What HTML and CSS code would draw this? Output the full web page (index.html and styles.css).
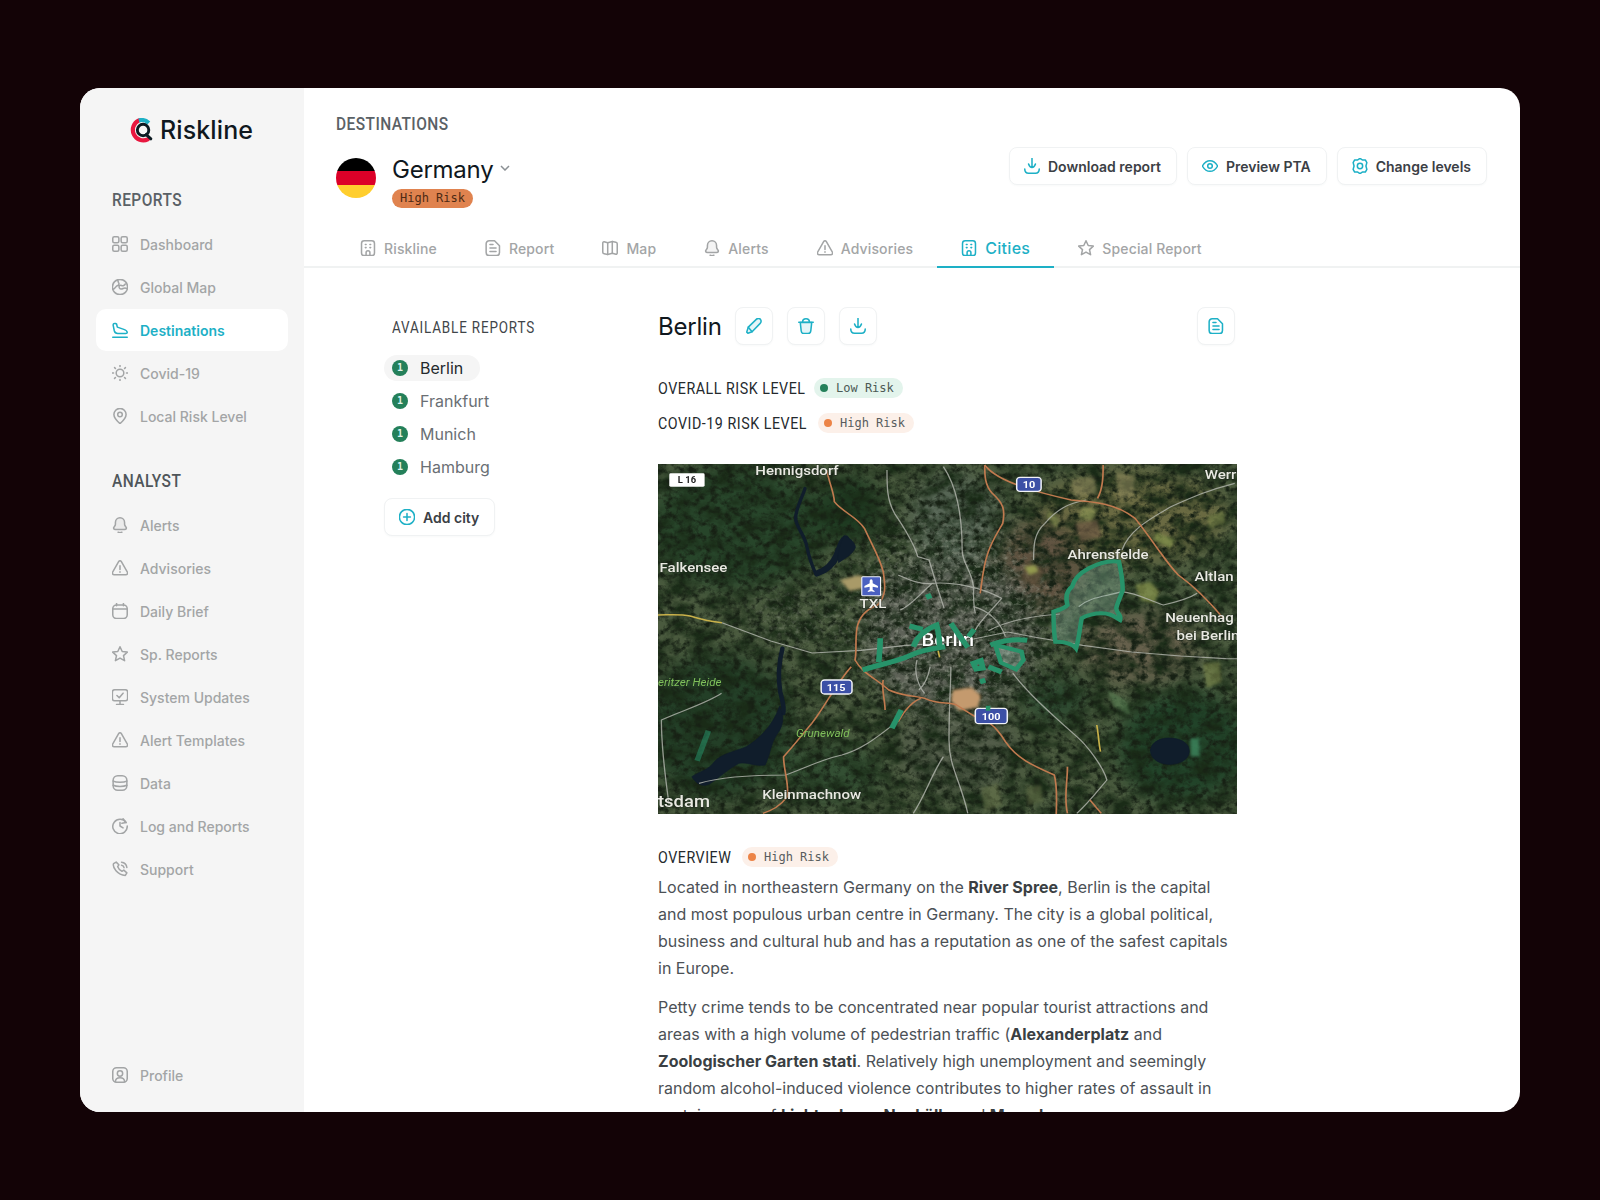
FILE: index.html
```html
<!DOCTYPE html>
<html lang="en">
<head>
<meta charset="utf-8">
<title>Riskline – Destinations</title>
<link rel="stylesheet" href="styles.css">
</head>
<body>
<svg class="defs" width="0" height="0" aria-hidden="true">
  <symbol id="i-grid" viewBox="1.500 1.500 21 21"><rect x="2.500" y="2.500" width="8" height="8" rx="2"/><rect x="13.500" y="2.500" width="8" height="8" rx="2"/><rect x="2.500" y="13.500" width="8" height="8" rx="2"/><rect x="13.500" y="13.500" width="8" height="8" rx="2"/></symbol>
  <symbol id="i-globe" viewBox="1.500 1.500 21 21"><circle cx="12" cy="12" r="10"/><path d="M3 15c3-1 3-4 6-5 2-.6 2-3 1-4l-1-3M21 14c-2-1-3-1-5 0-2 1-4 1-5-1-1-2 1-4 3-3 2 1 4 0 5-2"/></symbol>
  <symbol id="i-plane" viewBox="1.500 1.500 21 21"><path d="M2.500 21.500h19"/><path d="M3 5.500c0-1.500 1.500-2.500 3-2l1.500.7 1 4 8.500 3c2.500.9 4.500 2.300 4.500 4 0 .8-.8 1.300-2 1.300H9c-2.500 0-4-1.500-4.500-3.500z"/></symbol>
  <symbol id="i-sun" viewBox="1.500 1.500 21 21"><circle cx="12" cy="12" r="5"/><path d="M12 2v1.500M12 20.500V22M2 12h1.500M20.500 12H22M4.900 4.900 6 6M18 18l1.100 1.100M4.900 19.100 6 18M18 6l1.100-1.100"/></symbol>
  <symbol id="i-pin" viewBox="1.500 1.500 21 21"><path d="M12 22c-4-3.500-8-7.500-8-12a8 8 0 0 1 16 0c0 4.500-4 8.500-8 12z"/><circle cx="12" cy="10" r="3"/></symbol>
  <symbol id="i-bell" viewBox="1.500 1.500 21 21"><path class="tint" d="M12 2.500c-3.700 0-6 2.800-6 6.300v2.200c0 1.500-.8 2.300-1.800 3.500-1.300 1.600-.5 3.500 1.800 3.500h12c2.300 0 3.100-1.900 1.800-3.500-1-1.200-1.800-2-1.800-3.500V8.800c0-3.500-2.300-6.300-6-6.300z"/><path d="M9.500 21.500c1.500 1 3.500 1 5 0"/></symbol>
  <symbol id="i-warn" viewBox="1.500 1.500 21 21"><path d="M10.200 3.600 2.300 17.500c-.9 1.600.2 3.500 2 3.500h15.400c1.800 0 2.900-1.900 2-3.500L13.800 3.600c-.8-1.400-2.800-1.400-3.600 0z"/><path d="M12 9v5M12 17v.5"/></symbol>
  <symbol id="i-cal" viewBox="1.500 1.500 21 21"><rect x="2.500" y="4" width="19" height="18" rx="5"/><path d="M7.500 2V5M16.500 2V5M3 9.500h18"/></symbol>
  <symbol id="i-star" viewBox="1.500 1.500 21 21"><path d="m12 2.500 2.900 6.200 6.700.8-5 4.600 1.400 6.700L12 17.400l-6 3.400 1.400-6.700-5-4.600 6.700-.8z"/></symbol>
  <symbol id="i-screen" viewBox="1.500 1.500 21 21"><rect x="2" y="2.500" width="20" height="14.500" rx="3"/><path d="M12 17v5M7.500 22h9M8 10l3 3 5-6"/></symbol>
  <symbol id="i-data" viewBox="1.500 1.500 21 21"><rect x="3" y="2.500" width="18" height="19" rx="6"/><path d="M3 9.500c4 2 14 2 18 0M3 15c4 2 14 2 18 0"/></symbol>
  <symbol id="i-log" viewBox="1.500 1.500 21 21"><path d="M20 7.500A9.500 9.500 0 1 0 21.500 12"/><path d="M16 2.500 20 7.500 14.500 8.500M12 7.500V12l4 2.500"/></symbol>
  <symbol id="i-phone" viewBox="1.500 1.500 21 21"><path d="M7 3 3.500 5c-1.500 5 5 15 15.500 15.500L21 17l-4-3.500-2.500 1.500c-2.500-1-4.500-3.500-5.500-6l1.500-2.500z"/><path d="M14 3c4 .5 6.500 3 7 7M14 7c2 .3 3 1.300 3.300 3.200"/></symbol>
  <symbol id="i-user" viewBox="1.500 1.500 21 21"><rect x="2.500" y="2.500" width="19" height="19" rx="5"/><circle cx="12" cy="10" r="3.500"/><path d="M6 21c0-7 12-7 12 0"/></symbol>
  <symbol id="i-build" viewBox="1.500 1.500 21 21"><rect x="3.500" y="2.500" width="17" height="19.500" rx="3.500"/><path d="M8.500 7.500h1M14.500 7.500h1M8.500 11.500h1M14.500 11.500h1M9.500 22v-4a2.500 2.500 0 0 1 5 0v4"/></symbol>
  <symbol id="i-doc" viewBox="1.500 1.500 21 21"><path d="M7 2.500h7l6.500 6.500v9a4 4 0 0 1-4 4H7a4 4 0 0 1-4-4V6.500a4 4 0 0 1 4-4z"/><path d="M8 12h8M8 16.500h8M8 7.500h4"/></symbol>
  <symbol id="i-map" viewBox="1.500 1.500 21 21"><path d="M2.500 5.500c0-1 .8-1.800 1.800-1.600L9 5l6-1.500 4.700 1c1 .2 1.800 1 1.800 2v12c0 1-.8 1.800-1.800 1.600L15 19l-6 1.500-4.700-1c-1-.2-1.800-1-1.800-2z"/><path d="M9 5v15.500M15 3.500V19"/></symbol>
  <symbol id="i-down" viewBox="1.500 1.500 21 21"><path d="M12 2v11M7.500 9.500c1 3 3 4.500 4.500 4.500s3.500-1.500 4.500-4.500"/><path d="M2.500 16c0 3.500 2 5.500 5 5.500h9c3 0 5-2 5-5.500"/></symbol>
  <symbol id="i-eye" viewBox="1.500 1.500 21 21"><path d="M2 12c2.500-4.500 6-7 10-7s7.500 2.500 10 7c-2.500 4.500-6 7-10 7s-7.500-2.500-10-7z"/><circle cx="12" cy="12" r="3"/></symbol>
  <symbol id="i-gear" viewBox="1.500 1.500 21 21"><path d="M12 2 15 4h4l2 3.500-1.200 4.500 1.200 4.500L19 20h-4l-3 2-3-2H5l-2-3.500L4.200 12 3 7.500 5 4h4z"/><circle cx="12" cy="12" r="3.500"/></symbol>
  <symbol id="i-edit" viewBox="1.500 1.500 21 21"><path class="tint" d="M4 21.500 2.500 20l2-6.500L15 3.300c2-2 4.700-1.500 5.700.4 1 1.700.6 3.700-.9 5.200L9.500 19.500z"/><path d="M4.500 13.500l5 6"/></symbol>
  <symbol id="i-trash" viewBox="1.500 1.500 21 21"><path class="tint" d="M4.500 7.500h15l-1.200 11c-.2 2-1.600 3.500-3.600 3.500H9.300c-2 0-3.400-1.500-3.600-3.500z"/><path d="M2.500 7h19M7.500 7c0-3 2-4.500 4.500-4.500s4.500 1.500 4.500 4.500"/></symbol>
  <symbol id="i-plus" viewBox="1.500 1.500 21 21"><circle cx="12" cy="12" r="10"/><path d="M12 7.500v9M7.500 12h9"/></symbol>
</svg>

<div class="window">
  <aside class="sidebar">
    <div class="logo">
      <svg class="logo-mark" viewBox="0 0 24 24" aria-hidden="true">
        <path class="logo-red" d="M9.500 2.300A10 10 0 0 0 18 20.500"/>
        <path class="logo-cyan" d="M9.500 2.300a10 10 0 0 1 9.500 2.500"/>
        <circle class="logo-dark" cx="13.500" cy="11.500" r="5.500"/>
        <path class="logo-dark" d="m16.500 16 4.500 4"/>
      </svg>
      <span class="logo-text">Riskline</span>
    </div>

    <h2 class="nav-title"><span class="narrow">REPORTS</span></h2>
    <nav class="nav">
      <a class="nav-item"><svg class="ico"><use href="#i-grid"/></svg>Dashboard</a>
      <a class="nav-item"><svg class="ico"><use href="#i-globe"/></svg>Global Map</a>
      <a class="nav-item is-active"><svg class="ico"><use href="#i-plane"/></svg>Destinations</a>
      <a class="nav-item"><svg class="ico"><use href="#i-sun"/></svg>Covid-19</a>
      <a class="nav-item"><svg class="ico"><use href="#i-pin"/></svg>Local Risk Level</a>
    </nav>

    <h2 class="nav-title nav-title-second"><span class="narrow">ANALYST</span></h2>
    <nav class="nav">
      <a class="nav-item"><svg class="ico"><use href="#i-bell"/></svg>Alerts</a>
      <a class="nav-item"><svg class="ico"><use href="#i-warn"/></svg>Advisories</a>
      <a class="nav-item"><svg class="ico"><use href="#i-cal"/></svg>Daily Brief</a>
      <a class="nav-item"><svg class="ico"><use href="#i-star"/></svg>Sp. Reports</a>
      <a class="nav-item"><svg class="ico"><use href="#i-screen"/></svg>System Updates</a>
      <a class="nav-item"><svg class="ico"><use href="#i-warn"/></svg>Alert Templates</a>
      <a class="nav-item"><svg class="ico"><use href="#i-data"/></svg>Data</a>
      <a class="nav-item"><svg class="ico"><use href="#i-log"/></svg>Log and Reports</a>
      <a class="nav-item"><svg class="ico"><use href="#i-phone"/></svg>Support</a>
    </nav>

    <a class="nav-item nav-bottom"><svg class="ico"><use href="#i-user"/></svg>Profile</a>
  </aside>

  <main class="main">
    <header class="head">
      <div class="head-left">
        <div class="crumb"><span class="narrow">DESTINATIONS</span></div>
        <div class="identity">
          <div class="flag"><span class="flag-b"></span><span class="flag-r"></span><span class="flag-y"></span></div>
          <div class="identity-text">
            <div class="country">Germany
              <svg class="chev" viewBox="0 0 10 6"><path d="m1 1 4 4 4-4"/></svg>
            </div>
            <span class="risk-solid">High Risk</span>
          </div>
        </div>
      </div>
      <div class="actions">
        <button class="btn"><svg class="ico ico-accent"><use href="#i-down"/></svg>Download report</button>
        <button class="btn"><svg class="ico ico-accent"><use href="#i-eye"/></svg>Preview PTA</button>
        <button class="btn"><svg class="ico ico-accent"><use href="#i-gear"/></svg>Change levels</button>
      </div>
    </header>

    <div class="tabs">
      <a class="tab"><svg class="ico"><use href="#i-build"/></svg>Riskline</a>
      <a class="tab"><svg class="ico"><use href="#i-doc"/></svg>Report</a>
      <a class="tab"><svg class="ico"><use href="#i-map"/></svg>Map</a>
      <a class="tab"><svg class="ico"><use href="#i-bell"/></svg>Alerts</a>
      <a class="tab"><svg class="ico"><use href="#i-warn"/></svg>Advisories</a>
      <a class="tab is-active"><svg class="ico"><use href="#i-build"/></svg>Cities</a>
      <a class="tab"><svg class="ico"><use href="#i-star"/></svg>Special Report</a>
    </div>

    <div class="content">
      <section class="cities">
        <h3 class="cities-title"><span class="narrow narrow-title">AVAILABLE REPORTS</span></h3>
        <ul class="city-list">
          <li class="city is-active"><span class="city-dot">1</span>Berlin</li>
          <li class="city"><span class="city-dot">1</span>Frankfurt</li>
          <li class="city"><span class="city-dot">1</span>Munich</li>
          <li class="city"><span class="city-dot">1</span>Hamburg</li>
        </ul>
        <button class="btn btn-add"><svg class="ico ico-accent"><use href="#i-plus"/></svg>Add city</button>
      </section>

      <section class="detail">
        <div class="detail-head">
          <h1 class="detail-title">Berlin</h1>
          <button class="icon-btn"><svg class="ico ico-accent"><use href="#i-edit"/></svg></button>
          <button class="icon-btn"><svg class="ico ico-accent"><use href="#i-trash"/></svg></button>
          <button class="icon-btn"><svg class="ico ico-accent"><use href="#i-down"/></svg></button>
          <button class="icon-btn icon-btn-end"><svg class="ico ico-accent"><use href="#i-doc"/></svg></button>
        </div>

        <div class="risk-row risk-row-first"><span class="label label-overall"><span class="narrow">OVERALL RISK LEVEL</span></span><span class="pill pill-low"><i class="pill-dot"></i>Low Risk</span></div>
        <div class="risk-row risk-row-second"><span class="label label-covid"><span class="narrow">COVID-19 RISK LEVEL</span></span><span class="pill pill-high"><i class="pill-dot"></i>High Risk</span></div>

        <svg class="map" viewBox="21 12 1540 1050" preserveAspectRatio="none" role="img" aria-label="Satellite map of Berlin">
          <defs>
            <filter id="mottle" x="0" y="0" width="100%" height="100%" color-interpolation-filters="sRGB">
              <feTurbulence type="fractalNoise" baseFrequency="0.018 0.022" numOctaves="5" seed="11"/>
              <feColorMatrix values="0 0 0 0 .10  0 0 0 0 .17  0 0 0 0 .09  2.400 0 0 0 -.85"/>
            </filter>
            <filter id="fine" x="0" y="0" width="100%" height="100%" color-interpolation-filters="sRGB">
              <feTurbulence type="fractalNoise" baseFrequency="0.05" numOctaves="4" seed="23"/>
              <feColorMatrix values="0 0 0 0 .09  0 0 0 0 .13  0 0 0 0 .08  0 3 0 0 -1.300"/>
            </filter>
            <filter id="speck" x="0" y="0" width="100%" height="100%" color-interpolation-filters="sRGB">
              <feTurbulence type="fractalNoise" baseFrequency="0.08" numOctaves="3" seed="4"/>
              <feColorMatrix values="0 0 0 0 .66  0 0 0 0 .68  0 0 0 0 .62  0 3 0 0 -1.450"/>
            </filter>
            <filter id="soft" color-interpolation-filters="sRGB"><feGaussianBlur stdDeviation="30"/></filter>
            <filter id="soft3" color-interpolation-filters="sRGB"><feGaussianBlur stdDeviation="60"/></filter>
            <filter id="soft1" color-interpolation-filters="sRGB"><feGaussianBlur stdDeviation="4"/></filter>
            <mask id="urban">
              <g filter="url(#soft3)" fill="#fff">
                <ellipse cx="800" cy="480" rx="280" ry="290"/>
                <ellipse cx="380" cy="480" rx="120" ry="60"/>
              </g>
            </mask>
          </defs>
          <rect x="21" y="12" width="1540" height="1050" fill="#4a5a3e"/>
          <g filter="url(#soft)">
            <ellipse cx="1280" cy="170" rx="260" ry="140" fill="#6a6a42"/>
            <ellipse cx="1040" cy="320" rx="120" ry="140" fill="#5f5240"/>
            <ellipse cx="1300" cy="560" rx="160" ry="110" fill="#66604c"/>
            <ellipse cx="800" cy="520" rx="230" ry="240" fill="#5e6258"/>
            <ellipse cx="810" cy="180" rx="120" ry="140" fill="#576656"/>
            <ellipse cx="820" cy="860" rx="160" ry="140" fill="#525c49"/>
            <ellipse cx="230" cy="200" rx="240" ry="190" fill="#27452a"/>
            <ellipse cx="530" cy="150" rx="90" ry="110" fill="#1e3a21"/>
            <ellipse cx="180" cy="800" rx="200" ry="220" fill="#233f27"/>
            <ellipse cx="1420" cy="860" rx="180" ry="170" fill="#214329"/>
            <ellipse cx="1080" cy="720" rx="90" ry="70" fill="#2b482f"/>
            <ellipse cx="480" cy="940" rx="140" ry="90" fill="#334f33"/>
          </g>
          <rect x="21" y="12" width="1540" height="1050" filter="url(#mottle)"/>
          <rect x="21" y="12" width="1540" height="1050" filter="url(#fine)"/>
          <rect x="21" y="12" width="1540" height="1050" filter="url(#speck)" mask="url(#urban)" opacity=".5"/>
          <g filter="url(#soft1)" class="fields">
            <path fill="#c49a6e" d="M805 690l50-8 25 25-8 35-50 10-22-30z"/>
            <path fill="#a99a68" d="M505 360l50-15 20 10-5 30-40 8z"/>
            <path fill="#8d9a50" opacity=".7" d="M1290 375l40-10 25 30-15 35-35-10z"/>
            <path fill="#8f9c52" opacity=".7" d="M1345 215l50 25-10 25-45-25z"/>
            <path fill="#9aa25c" opacity=".6" d="M1060 150l30 30-10 25-25-35zM1150 140l45 5-25 40-30-15z"/>
            <path fill="#7e8a4c" opacity=".6" d="M1480 170l45-20 5 40-40 15zM1470 610l45-5 5 60-40 20z"/>
            <path fill="#6f5a45" opacity=".7" d="M1000 300l50 30-25 50-40-25zM1130 190l60-10 10 50-55 15z"/>
            <path fill="#8f8a5e" opacity=".6" d="M1120 60l60-10 10 50-60 10zM1240 40l50 10-5 60-40 5z"/>
            <path fill="#a3ae55" opacity=".8" d="M995 320l30-5 8 20-25 10z"/>
            <path fill="#3f8a60" opacity=".8" d="M1437 835h24v55h-24z"/>
            <path fill="#6e7a4e" opacity=".5" d="M880 985l45-15 10 65-45 20zM1000 980l40-5 5 50-40 10z"/>
            <path fill="#5e8a5a" opacity=".5" d="M1215 690l50 30 15 50-45-30z"/>
          </g>
          <g class="water">
            <path d="M412 85c-8 30-25 60-25 90 0 25 25 50 30 85 5 30 15 60 25 85"/>
            <path class="water-wide" d="M445 340c25-10 40-25 50-50 10-25 15-50 25-55"/>
            <path class="water-thin" d="M352 565c-10 45-12 90-6 130 5 25 12 45 8 65"/>
            <path class="water-lake" d="M344 740c15 30 10 60-8 85-15 25-15 55-30 90-30 5-45-10-70-5-25 15-50 40-75 60-20 15-40 0-50-20 20-15 45-20 60-45 20-25 55-30 85-45 30-20 70-60 88-120z"/>
            <path class="water-lake" d="M1331 870c2-25 30-40 60-35 28 3 45 20 43 42-3 25-30 38-58 36-25-2-47-20-45-43z"/>
            <path class="water-lake" d="M516 228c15 5 30 20 30 35-8 20-25 30-45 45-5-25 5-60 15-80z"/>
          </g>
          <g class="road-gray">
            <path d="M191 488l130 55 110 36 130-8 120-15 140-10 130-30 70 15 130 25 130 20 130 12 120 8 150 1"/>
            <path d="M630 30c0 50 0 90 20 130 30 50 55 100 62 130l30 10 20 75 20 70"/>
            <path d="M780 20c30 50 50 130 50 250 0 40 25 60 30 110 0 30 0 60 5 80"/>
            <path d="M750 370c50-5 130 10 185 45-30 40-60 70-70 95"/>
            <path d="M660 345c30 15 60 30 90 25-30 30-60 70-85 80M860 440c35 10 70 40 85 90"/>
            <path d="M1090 462c-70 5-140 20-190 50M1140 440c30-30 70-30 115-45 40 5 70 25 110 40 40-10 70-20 90-35"/>
            <path d="M1020 300c0-40 0-80 30-110 30-40 60-60 110-70M1255 270c20-60 70-90 130-130 60-30 100-50 170-70"/>
            <path d="M800 620c0 50-5 110-5 220 0 80 30 120 50 220M710 600c-10 40 5 80 20 100M745 620c-5 30-15 55-30 70"/>
            <path d="M965 640c40 60 100 120 170 190 30 30 70 90 80 130-30 40-50 70-80 100"/>
            <path d="M640 800c-40 35-80 70-130 85-60 15-110 45-150 60-80 0-170 5-230 25"/>
            <path d="M190 700c-40 30-100 50-160 80 0 80 10 170 20 250M780 890c-30 50-50 120-80 170"/>
          </g>
          <g class="road-orange">
            <path d="M470 30c5 35 20 70 20 95 20 30 60 45 80 80 20 50 40 85 50 130 5 40 10 70-15 100-35 15-50 40-55 70-5 40 0 70-5 95 20 40 55 55 90 90 40 20 60 15 95 25 40 20 60 10 85 20 30 20 50 40 80 50 20 10 40 40 50 60 30 50 70 70 130 100 10 40 5 90 5 135"/>
            <path d="M535 620c-40 50-70 120-105 170-30 40-50 70-75 100 0 40 15 80 10 120-20 30-40 40-65 50"/>
            <path d="M890 15c0 30 0 60 20 85 30 30 35 50 28 90-15 30-30 55-40 90-12 40-15 80-20 120"/>
            <path d="M890 15c20 30 60 50 100 65 50 20 90 30 130 40 60 5 120 10 170 55 50 70 80 130 115 170 50 40 90 90 120 130"/>
            <path d="M1205 15c0 30 0 70-15 100M620 660c-5 30 5 60 5 90M720 715c-25 10-45 40-60 70M1110 920c0 50-10 90 0 140M1170 1020l30 40"/>
          </g>
          <g class="road-yellow">
            <path d="M21 465c30 0 60-3 85 3 30 10 55 17 85 20M1188 795c5 30 5 55 10 80M766 572l4 20"/>
          </g>
          <g class="shield">
            <rect x="975" y="52" width="65" height="42" rx="9"/><text class="shield-text" x="1008" y="83">10</text>
            <rect x="455" y="660" width="82" height="42" rx="9"/><text class="shield-text" x="495" y="693">115</text>
            <rect x="865" y="745" width="85" height="46" rx="9"/><text class="shield-text" x="907" y="779">100</text>
          </g>
          <rect class="air" x="563" y="350" width="50" height="57" rx="3"/>
          <path class="air-plane" d="M588 358c3 0 4 3 4 7v5l14 8v5l-14-3v9l5 4v3l-9-2-9 2v-3l5-4v-9l-14 3v-5l14-8v-5c0-4 1-7 4-7z"/>
          <rect class="l16" x="51" y="40" width="94" height="40" rx="4"/>
          <text class="l16-text" x="98" y="70">L 16</text>
          <g class="labels">
            <text x="280" y="46">Hennigsdorf</text>
            <text x="1475" y="57">Werr</text>
            <text x="25" y="337">Falkensee</text>
            <text x="1110" y="298">Ahrensfelde</text>
            <text x="1448" y="363">Altlan</text>
            <text x="1370" y="485">Neuenhag</text>
            <text x="1400" y="540">bei Berlin</text>
            <text x="557" y="445">TXL</text>
            <text x="298" y="1016">Kleinmachnow</text>
            <text class="label-lg" x="21" y="1042">tsdam</text>
            <text class="label-city" x="722" y="558">Berlin</text>
          </g>
          <g class="labels-green">
            <text x="21" y="678">eritzer Heide</text>
            <text x="388" y="832">Grunewald</text>
          </g>
          <g class="zone">
            <path class="zone-fill" d="M1122 380c5-20 20-40 45-55 25-15 50-25 80-20 5 25 10 50 10 85-5 20-15 40-17 55 0 15 15 20 10 35-15-10-25-20-50-20-15 0-40 5-52 15-5 25-5 50-15 90-10-15-35-20-55-20-5-30-5-60-5-90 15-5 30-10 37-20-5-20-5-40 12-55z"/>
            <path d="M565 630c40-15 90-25 130-45 25-15 60-20 90-25M612 535c0 25-2 50-4 72M690 498l35 10M700 560c10-30 30-50 62-65 5 20 8 45 8 72M800 490c15 25 30 50 45 72M862 508l-15 22M738 402l6 14M905 555c30-12 60-20 98-14"/>
            <path class="zone-fill-b" d="M918 555l70 20 5 25-20 28-40-20z"/>
            <path d="M860 610l20-8 5 22-18 3zM900 620l35 16M882 656l5 14M893 745h12M668 750l-25 55"/>
            <path class="zone-dim" d="M155 812l-30 90"/>
          </g>
        </svg>

        <div class="risk-row overview-row"><span class="label label-overview"><span class="narrow">OVERVIEW</span></span><span class="pill pill-high"><i class="pill-dot"></i>High Risk</span></div>
        <p class="para">Located in northeastern Germany on the <b>River Spree</b>, Berlin is the capital and most populous urban centre in Germany. The city is a global political, business and cultural hub and has a reputation as one of the safest capitals in Europe.</p>
        <p class="para">Petty crime tends to be concentrated near popular tourist attractions and areas with a high volume of pedestrian traffic (<b>Alexanderplatz</b> and <b>Zoologischer Garten stati</b>. Relatively high unemployment and seemingly random alcohol-induced violence contributes to higher rates of assault in certain areas of <b>Lichtenberg, Neukölln</b> and <b>Marzahn</b>.</p>
      </section>
    </div>
  </main>
</div>
</body>
</html>
```

FILE: styles.css
```css
* { box-sizing: border-box; }
html, body { height: 100%; }
body {
  margin: 0;
  padding: 88px 80px;
  background: #130306;
  font-family: "Inter", "Liberation Sans", sans-serif;
  overflow: hidden;
}
.defs { position: absolute; }
a { display: block; }
button { font-family: inherit; }

.narrow {
  display: inline-block;
  font-family: "Roboto", "Liberation Sans", sans-serif;
  white-space: nowrap;
  transform: scaleX(.86);
  transform-origin: left center;
}
.narrow-title { transform: scaleX(.84); }
.label .narrow { transform: scaleX(.89); }

.window {
  display: flex;
  width: 1440px;
  height: 1024px;
  border-radius: 20px;
  overflow: hidden;
  background: #fff;
}

/* Sidebar */
.sidebar {
  display: flex;
  flex-direction: column;
  flex: 0 0 224px;
  padding: 30px 16px 0;
  background: #f5f5f5;
}
.logo { display: flex; align-items: center; gap: 6px; height: 24px; margin-left: 33px; }
.logo-mark { width: 25px; height: 25px; fill: none; stroke-width: 4; stroke-linecap: round; }
.logo-red { stroke: #e8173f; }
.logo-cyan { stroke: #1fb1c6; stroke-linecap: butt; }
.logo-dark { stroke: #0c1a22; stroke-width: 2.800; }
.logo-text { font-size: 25px; font-weight: 500; color: #10181e; letter-spacing: .1px; }

.nav-title {
  margin: 47px 0 12px;
  padding-left: 16px;
  height: 22px;
  font-size: 18px;
  font-weight: 500;
  line-height: 22px;
  letter-spacing: .5px;
  color: #5a6166;
}
.nav-title-second { margin-top: 33px; color: #4f565a; }
.nav { display: flex; flex-direction: column; gap: 1px; }
.nav-item {
  display: flex;
  align-items: center;
  gap: 12px;
  height: 42px;
  padding-left: 16px;
  border-radius: 10px;
  font-size: 14px;
  font-weight: 500;
  color: #a3a5a6;
}
.nav-item.is-active { background: #fff; color: #1db0c6; font-weight: 600; }
.nav-bottom { margin-top: auto; margin-bottom: 16px; }

.ico {
  flex: none;
  width: 16px;
  height: 16px;
  fill: none;
  stroke: currentColor;
  stroke-width: 2;
  stroke-linecap: round;
  stroke-linejoin: round;
}
.ico-accent { color: #1db0c6; }
.tint { fill: currentColor; fill-opacity: .12; }

/* Main */
.main { flex: 1; min-width: 0; }
.head { display: flex; justify-content: space-between; align-items: flex-start; padding: 25px 33px 0 32px; }
.crumb { font-size: 18px; font-weight: 500; line-height: 22px; letter-spacing: .5px; color: #5a6166; }
.identity { display: flex; gap: 16px; margin-top: 23px; }
.flag { display: flex; flex-direction: column; width: 40px; height: 40px; border-radius: 50%; overflow: hidden; }
.flag span { flex: 1; }
.flag-b { background: #000; }
.flag-r { background: #dc0028; }
.flag-y { background: #ffce2e; }
.identity-text { display: flex; flex-direction: column; align-items: flex-start; }
.country { display: flex; align-items: center; gap: 7px; height: 24px; font-size: 24px; color: #10181e; line-height: 24px; letter-spacing: -.25px; }
.chev { width: 10px; height: 6px; margin-top: -4px; fill: none; stroke: #8b9094; stroke-width: 1.500; }
.risk-solid {
  margin-top: 7px;
  padding: 0 8px;
  height: 19px;
  border-radius: 10px;
  background: #e0834f;
  color: #4d2a14;
  font: 400 12px/19px "DejaVu Sans Mono", "Liberation Mono", monospace;
}
.actions { display: flex; gap: 10px; margin-top: 34px; }
.btn {
  display: flex;
  align-items: center;
  gap: 8px;
  height: 38px;
  padding: 0 15px 0 14px;
  border: 1px solid #f0f2f3;
  border-radius: 8px;
  background: #fff;
  box-shadow: 0 1px 2px rgba(30, 50, 60, .03);
  font-size: 14px;
  font-weight: 600;
  color: #3b4045;
}

.tabs { display: flex; margin-top: 20px; padding-left: 32px; border-bottom: 2px solid #f0f2f2; height: 40px; }
.tab {
  display: flex;
  align-items: center;
  gap: 8px;
  height: 40px;
  padding: 0 24px;
  font-size: 14px;
  font-weight: 500;
  letter-spacing: .15px;
  color: #a3a5a6;
}
.tab.is-active { padding-top: 2px; border-bottom: 2px solid #1db0c6; font-size: 16px; letter-spacing: .3px; color: #1db0c6; }

/* Content */
.content { display: flex; padding-left: 80px; }
.cities { display: flex; flex-direction: column; align-items: flex-start; flex: 0 0 274px; padding-top: 48px; }
.cities-title { margin: 0 0 0 8px; font-size: 16px; font-weight: 400; line-height: 22px; letter-spacing: 1px; color: #3f4549; }
.city-list { display: flex; flex-direction: column; align-items: flex-start; gap: 7px; margin: 16px 0 18px; padding: 0; list-style: none; }
.city {
  display: flex;
  align-items: center;
  gap: 12px;
  height: 26px;
  padding: 0 17px 0 8px;
  border-radius: 13px;
  font-size: 16px;
  color: #6a6f74;
}
.city.is-active { background: #f5f5f5; color: #24292d; }
.city-dot {
  width: 16px;
  height: 16px;
  border-radius: 50%;
  background: #24805a;
  color: #dff3ea;
  font: 700 10px/16px "DejaVu Sans Mono", monospace;
  text-align: center;
}

.detail { flex: 0 0 579px; padding-top: 39px; }
.detail-head { display: flex; align-items: center; }
.detail-title { margin: 0 13px 0 0; font-size: 24px; font-weight: 400; color: #10181e; letter-spacing: -.2px; }
.icon-btn {
  display: flex;
  align-items: center;
  justify-content: center;
  width: 38px;
  height: 38px;
  margin-right: 14px;
  padding: 0;
  border: 1px solid #f0f2f3;
  border-radius: 8px;
  background: #fff;
  box-shadow: 0 1px 2px rgba(30, 50, 60, .03);
}
.icon-btn-end { margin-left: auto; margin-right: 2px; }

.risk-row { display: flex; align-items: center; gap: 12px; height: 22px; }
.risk-row-first { margin-top: 32px; }
.risk-row-second { margin-top: 13px; }
.label { font-size: 16px; line-height: 22px; letter-spacing: .6px; color: #24292d; white-space: nowrap; }
.label-overall { width: 144px; }
.label-covid { width: 148px; }
.label-overview { width: 72px; }
.pill {
  display: flex;
  align-items: center;
  gap: 8px;
  height: 20px;
  padding: 0 9px 0 6px;
  border-radius: 10px;
  font: 400 12px/20px "DejaVu Sans Mono", "Liberation Mono", monospace;
  color: #575c5e;
}
.pill-dot { width: 8px; height: 8px; border-radius: 50%; }
.pill-low { background: #e3f4ec; color: #4c5a54; }
.pill-low .pill-dot { background: #24805a; }
.pill-high { background: #fcf0e9; }
.pill-high .pill-dot { background: #ec8447; }

/* Map */
.map { display: block; width: 579px; height: 350px; margin-top: 30px; filter: blur(.35px); }
.water { fill: none; stroke: #101d2b; stroke-width: 9; stroke-linecap: round; stroke-linejoin: round; }
.water-wide { stroke-width: 18; }
.water-thin { stroke-width: 12; }
.water-lake { fill: #101d2b; stroke-width: 2; }
.road-gray { fill: none; stroke: #b5b8b0; stroke-width: 3.500; stroke-linejoin: round; opacity: .8; }
.road-orange { fill: none; stroke: #c07a4f; stroke-width: 4.500; stroke-linejoin: round; }
.road-yellow { fill: none; stroke: #c9b14a; stroke-width: 4.500; }
.zone { fill: none; stroke: #27936a; stroke-width: 15; stroke-linejoin: miter; }
.zone-fill { fill: rgba(160, 205, 185, .3); stroke-width: 12; }
.zone-fill-b { fill: rgba(160, 205, 185, .3); stroke-width: 12; }
.zone-dim { opacity: .55; }
.shield rect { fill: #3c50a6; stroke: #f2f3f8; stroke-width: 4; }
.shield-text { font: 700 29px "Roboto", sans-serif; fill: #fff; text-anchor: middle; }
.air { fill: #4a60c0; stroke: #f2f3f8; stroke-width: 3; }
.air-plane { fill: #fff; }
.l16 { fill: #fff; }
.l16-text { font: 700 25px "Roboto", sans-serif; fill: #222; text-anchor: middle; }
.labels text {
  font: 500 40px "Roboto", sans-serif;
  fill: #e9e9e2;
  paint-order: stroke;
  stroke: rgba(30, 40, 30, .5);
  stroke-width: 4px;
}
.labels .label-lg { font-size: 49px; }
.labels .label-city { font-size: 54px; fill: #fff; }
.labels-green text { font: italic 400 31px "Roboto", sans-serif; fill: #7fbf5a; }

/* Copy */
.overview-row { margin-top: 32px; }
.para { margin: 0 0 12px; font-size: 16px; line-height: 27px; color: #4c5156; }
.overview-row + .para { margin-top: 6px; }
.para b { font-weight: 700; color: #3a3f43; }
```
